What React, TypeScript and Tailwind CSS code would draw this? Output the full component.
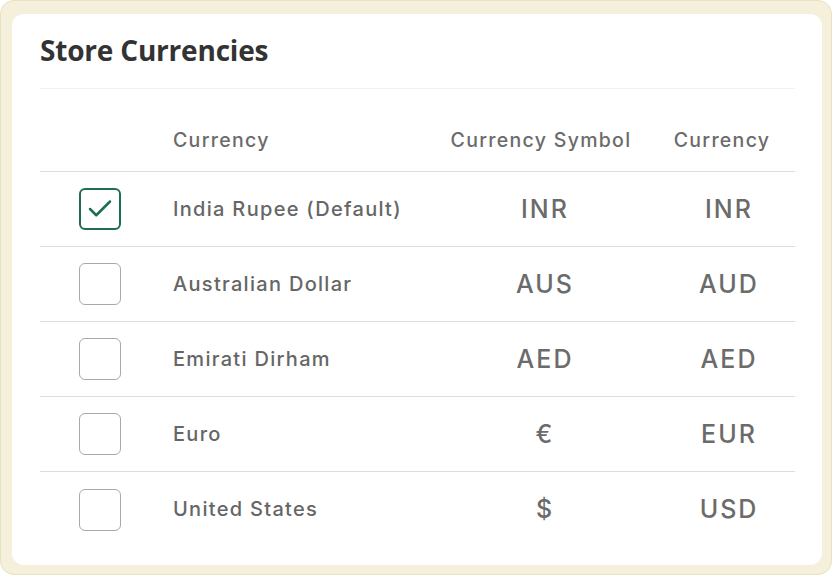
import { Check } from "lucide-react";

const rows = [
  { name: "India Rupee (Default)", symbol: "INR", code: "INR", checked: true },
  { name: "Australian Dollar", symbol: "AUS", code: "AUD", checked: false },
  { name: "Emirati Dirham", symbol: "AED", code: "AED", checked: false },
  { name: "Euro", symbol: "€", code: "EUR", checked: false },
  { name: "United States", symbol: "$", code: "USD", checked: false },
];

export default function App() {
  return (
    <div className="h-[577px] w-[834px] bg-white" style={{ fontFamily: "Inter, 'Open Sans', sans-serif" }}>
      <div className="h-[575px] w-[832px] rounded-[14px] border border-[#e9e1c2] bg-[#f5f0dc] pl-[11px] pr-[9px] pt-[13px] pb-[9px]">
        <div className="h-full w-full rounded-[12px] bg-white px-[28px] pt-[18px]">
          <h1 className="text-[28px] font-bold leading-[36px] tracking-[-0.2px] text-[#333333]" style={{ fontFamily: "'Open Sans', sans-serif" }}>
            Store Currencies
          </h1>
          <div className="mt-[20px] h-px w-[755px] bg-[#f2f2f2]" />
          <div className="grid w-[755px] grid-cols-[120px_281px_200px_154px] border-b border-[#dddddd] pt-[37px] pb-[16px] text-[19.5px] font-medium tracking-[1.3px] text-[#6b6b6b]">
            <div />
            <div className="pl-[13px]">Currency</div>
            <div className="text-center">Currency Symbol</div>
            <div className="text-center pl-[8px]">Currency</div>
          </div>
          {rows.map((r, i) => (
            <div
              key={r.code}
              className={`grid h-[75px] w-[755px] grid-cols-[120px_281px_200px_154px] items-center ${i < rows.length - 1 ? "border-b border-[#dddddd]" : ""}`}
            >
              <div className="flex justify-center">
                {r.checked ? (
                  <div className="flex h-[42px] w-[42px] items-center justify-center rounded-[6px] border-2 border-[#1e6e52]">
                    <Check className="h-[30px] w-[30px] text-[#1e6e52]" strokeWidth={2} />
                  </div>
                ) : (
                  <div className="h-[42px] w-[42px] rounded-[6px] border-[1.5px] border-[#a9a9a9]" />
                )}
              </div>
              <div className="-mt-[1px] pl-[13px] text-[20px] font-medium tracking-[1.3px] text-[#666666]">{r.name}</div>
              <div className="pl-[8px] text-center text-[25px] font-medium tracking-[2px] text-[#6b6b6b]">{r.symbol}</div>
              <div className="pl-[22px] text-center text-[25px] font-medium tracking-[2px] text-[#6b6b6b]">{r.code}</div>
            </div>
          ))}
        </div>
      </div>
    </div>
  );
}
